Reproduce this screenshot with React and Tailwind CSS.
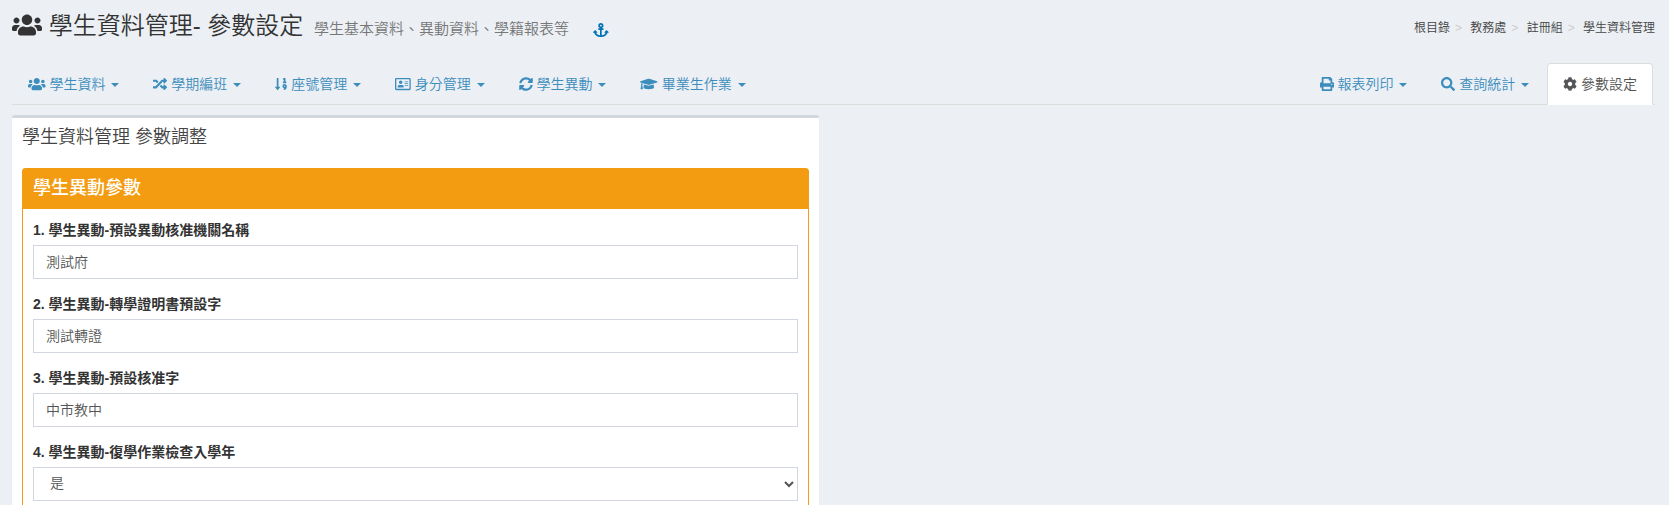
import {
  FaUsers, FaRandom, FaSortNumericDown, FaRegAddressCard, FaSyncAlt,
  FaGraduationCap, FaSearch, FaCog, FaAnchor,
} from "react-icons/fa";

function PrintIcon({ className }) {
  return (
    <svg viewBox="0 0 512 512" fill="currentColor" className={className}>
      <path d="M464 192h-16V81.941a24 24 0 0 0-7.029-16.97L383.029 7.029A24 24 0 0 0 366.059 0H88C74.745 0 64 10.745 64 24v168H48c-26.51 0-48 21.49-48 48v132c0 6.627 5.373 12 12 12h52v104c0 13.255 10.745 24 24 24h336c13.255 0 24-10.745 24-24V384h52c6.627 0 12-5.373 12-12V240c0-26.51-21.49-48-48-48zm-80 256H128v-96h256v96zM384 224H128V64h192v48c0 8.837 7.163 16 16 16h48v96zm48 72c-13.255 0-24-10.745-24-24s10.745-24 24-24 24 10.745 24 24-10.745 24-24 24z" />
    </svg>
  );
}

const leftTabs = [
  { label: "學生資料", Icon: FaUsers, size: "w-[17.5px]" },
  { label: "學期編班", Icon: FaRandom, size: "w-[14px]" },
  { label: "座號管理", Icon: FaSortNumericDown, size: "w-[12.25px]" },
  { label: "身分管理", Icon: FaRegAddressCard, size: "w-[15.75px]" },
  { label: "學生異動", Icon: FaSyncAlt, size: "w-[14px]" },
  { label: "畢業生作業", Icon: FaGraduationCap, size: "w-[17.5px]" },
];

const rightTabs = [
  { label: "報表列印", Icon: PrintIcon, size: "w-[14px]" },
  { label: "查詢統計", Icon: FaSearch, size: "w-[14px]" },
  { label: "參數設定", Icon: FaCog, size: "w-[14px]", active: true },
];

const crumbs = ["根目錄", "教務處", "註冊組", "學生資料管理"];

const fields = [
  { label: "1. 學生異動-預設異動核准機關名稱", value: "測試府" },
  { label: "2. 學生異動-轉學證明書預設字", value: "測試轉證" },
  { label: "3. 學生異動-預設核准字", value: "中市教中" },
  { label: "4. 學生異動-復學作業檢查入學年", options: ["是", "否"] },
];

function Tab({ label, Icon, size, active }) {
  const look = active
    ? "border-[#ddd] border-b-transparent bg-white text-[#555]"
    : "border-transparent text-[#3c8dbc]";
  return (
    <li className="mr-0.5 -mb-px">
      <a
        className={`flex h-[42px] items-center rounded-t border px-[15px] text-sm leading-5 whitespace-nowrap ${look}`}
      >
        <Icon className={`h-[14px] shrink-0 ${size}`} />
        <span className="-mt-px ml-[3.9px]">{label}</span>
        {!active && (
          <span className="mt-0.5 ml-[5.9px] border-x-4 border-t-4 border-x-transparent border-t-current" />
        )}
      </a>
    </li>
  );
}

function Field({ label, value, options }) {
  const control =
    "block h-[34px] w-full rounded-none border border-[#d2d6de] bg-white px-3 pt-[5px] pb-[7px] text-sm leading-5 text-[#555] outline-none";
  return (
    <div className="mb-[15px]">
      <label className="mb-[5px] block text-sm leading-5 font-bold text-[#333] font-['Liberation_Sans','Noto_Sans_CJK_TC',sans-serif]">
        {label}
      </label>
      {options ? (
        <select className={control}>
          {options.map((o) => (
            <option key={o}>{o}</option>
          ))}
        </select>
      ) : (
        <input type="text" defaultValue={value} className={control} />
      )}
    </div>
  );
}

export default function App() {
  return (
    <div className="h-[505px] overflow-hidden bg-[#ecf0f5] pr-[14px] pl-3 font-['Liberation_Sans','Noto_Sans_CJK_TC_DemiLight','Noto_Sans_CJK_TC',sans-serif] text-[#333]">
      <header className="flex h-[63px] items-start justify-between">
        <h1 className="flex h-[50px] items-center text-2xl leading-6 whitespace-nowrap">
          <FaUsers className="h-6 w-[30px]" />
          <span className="mt-0.5 ml-[6.7px]">學生資料管理- 參數設定</span>
          <small className="mt-1.5 ml-[10.7px] text-[15px] leading-[15px] text-[#777]">
            學生基本資料、異動資料、學籍報表等
          </small>
          <FaAnchor className="mt-2.5 ml-6 h-[14px] w-[15.75px] text-[#0073b7]" />
        </h1>
        <ol className="mt-[19px] flex text-xs leading-[18px] text-[#444]">
          {crumbs.map((c, i) => (
            <li key={c} className="flex">
              {i > 0 && <span className="px-[5px] text-[#ccc]">{">\u00a0"}</span>}
              {c}
            </li>
          ))}
        </ol>
      </header>

      <nav className="flex justify-between border-b border-[#ddd]">
        <ul className="flex">
          {leftTabs.map((t) => <Tab key={t.label} {...t} />)}
        </ul>
        <ul className="flex">
          {rightTabs.map((t) => <Tab key={t.label} {...t} />)}
        </ul>
      </nav>

      <main className="mt-2.5 w-[806.5px] rounded-[3px] border-t-3 border-[#d2d6de] bg-white shadow-[0_1px_1px_rgba(0,0,0,0.1)]">
        <h3 className="h-10 px-2.5 pt-[9px] text-lg leading-5 text-[#444]">學生資料管理 參數調整</h3>
        <div className="p-2.5">
          <section className="rounded-[3px] border border-[#f39c12]">
            <h3 className="h-10 bg-[#f39c12] px-2.5 pt-[9px] text-lg leading-5 font-medium text-white font-['Liberation_Sans','Noto_Sans_CJK_TC',sans-serif]">
              學生異動參數
            </h3>
            <div className="p-2.5 pt-[11px]">
              {fields.map((f) => <Field key={f.label} {...f} />)}
            </div>
          </section>
        </div>
      </main>
    </div>
  );
}
